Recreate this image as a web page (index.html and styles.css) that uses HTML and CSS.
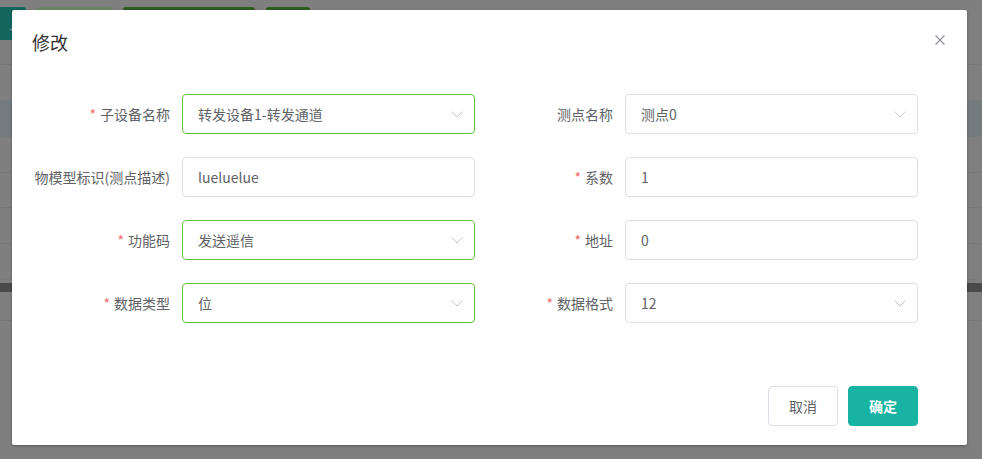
FILE: index.html
```html
<!DOCTYPE html>
<html lang="zh-CN">
<head>
<meta charset="utf-8">
<title>修改</title>
<link rel="stylesheet" href="styles.css">
</head>
<body>
<div class="page">
  <div class="toolbar">
    <span class="tb-btn tb-teal">入</span>
    <span class="tb-btn tb-olive"></span>
    <span class="tb-btn tb-green tb-wide"></span>
    <span class="tb-btn tb-green tb-small"></span>
  </div>
  <div class="row r1"></div>
  <div class="row band"></div>
  <div class="row r2"></div>
  <div class="row r3"></div>
  <div class="row r4"></div>
  <div class="row r5"></div>
  <div class="row dark"></div>
  <div class="row r6"></div>
</div>

<div class="dialog">
  <div class="dialog-header">
    <span class="dialog-title">修改</span>
    <button class="dialog-close" aria-label="关闭">
      <svg width="10" height="10" viewBox="0 0 10 10"><path d="M0.5 0.5 L9.5 9.5 M9.5 0.5 L0.5 9.5" stroke="#909399" stroke-width="1.2" fill="none"/></svg>
    </button>
  </div>
  <div class="dialog-body">
    <div class="form">
      <div class="form-item">
        <label class="label"><span class="req">*</span>子设备名称</label>
        <div class="input success select"><span>转发设备1-转发通道</span><svg class="arrow" width="12" height="7" viewBox="0 0 12 7"><path d="M0.5 0.5 L6 6 L11.5 0.5" stroke="#c0c4cc" stroke-width="1" fill="none"/></svg></div>
      </div>
      <div class="form-item">
        <label class="label">测点名称</label>
        <div class="input select"><span>测点0</span><svg class="arrow" width="12" height="7" viewBox="0 0 12 7"><path d="M0.5 0.5 L6 6 L11.5 0.5" stroke="#c0c4cc" stroke-width="1" fill="none"/></svg></div>
      </div>
      <div class="form-item">
        <label class="label">物模型标识(测点描述)</label>
        <div class="input"><span>lueluelue</span></div>
      </div>
      <div class="form-item">
        <label class="label"><span class="req">*</span>系数</label>
        <div class="input"><span>1</span></div>
      </div>
      <div class="form-item">
        <label class="label"><span class="req">*</span>功能码</label>
        <div class="input success select"><span>发送遥信</span><svg class="arrow" width="12" height="7" viewBox="0 0 12 7"><path d="M0.5 0.5 L6 6 L11.5 0.5" stroke="#c0c4cc" stroke-width="1" fill="none"/></svg></div>
      </div>
      <div class="form-item">
        <label class="label"><span class="req">*</span>地址</label>
        <div class="input"><span>0</span></div>
      </div>
      <div class="form-item">
        <label class="label"><span class="req">*</span>数据类型</label>
        <div class="input success select"><span>位</span><svg class="arrow" width="12" height="7" viewBox="0 0 12 7"><path d="M0.5 0.5 L6 6 L11.5 0.5" stroke="#c0c4cc" stroke-width="1" fill="none"/></svg></div>
      </div>
      <div class="form-item">
        <label class="label"><span class="req">*</span>数据格式</label>
        <div class="input select"><span>12</span><svg class="arrow" width="12" height="7" viewBox="0 0 12 7"><path d="M0.5 0.5 L6 6 L11.5 0.5" stroke="#c0c4cc" stroke-width="1" fill="none"/></svg></div>
      </div>
    </div>
  </div>
  <div class="dialog-footer">
    <button class="btn btn-default">取消</button>
    <button class="btn btn-primary">确定</button>
  </div>
</div>
</body>
</html>
```

FILE: styles.css
```css
* { box-sizing: border-box; }
html, body {
  margin: 0;
  padding: 0;
  width: 982px;
  height: 459px;
  overflow: hidden;
  background: #7f7f7f;
  font-family: "Noto Sans CJK SC", "Noto Sans", sans-serif;
}

/* underlying page (dimmed by mask) */
.page {
  width: 982px;
}
.toolbar {
  height: 65px;
  padding-top: 7px;
  display: flex;
  gap: 11px;
  border-bottom: 1px solid #767676;
}
.tb-btn {
  height: 33px;
  border-radius: 3px;
  display: inline-block;
}
.tb-teal {
  width: 26px;
  background: #12665c;
  color: #9fbdb8;
  font-size: 13px;
  line-height: 33px;
  text-align: right;
  padding-right: 4px;
  border-radius: 0 3px 3px 0;
}
.tb-olive { width: 75px; background: #6a8660; }
.tb-wide { width: 132px; }
.tb-small { width: 44px; }
.tb-green { background: #2f5c1f; }
.row { border-bottom: 1px solid #767676; }
.r1 { height: 35px; border-bottom: none; }
.band { height: 37px; background: #737b7f; border-bottom: none; }
.r2 { height: 36px; }
.r3 { height: 35px; }
.r4 { height: 36px; }
.r5 { height: 36px; border-bottom-color: #7a7a7a; }
.dark { height: 9px; background: #4a4a4a; border-bottom: none; margin-top: 3px; }
.r6 { height: 29px; }

/* dialog */
.dialog {
  position: absolute;
  left: 12px;
  top: 10px;
  width: 955px;
  height: 435px;
  background: #fff;
  border-radius: 2px;
  box-shadow: 0 1px 3px rgba(0,0,0,.3);
  display: flex;
  flex-direction: column;
}
.dialog-header {
  position: relative;
  padding: 20px 20px 10px;
}
.dialog-title {
  display: block;
  font-size: 18px;
  line-height: 24px;
  color: #303133;
}
.dialog-close {
  position: absolute;
  top: 25px;
  right: 22px;
  width: 10px;
  height: 10px;
  padding: 0;
  border: none;
  background: transparent;
  display: flex;
}
.dialog-body {
  padding: 30px 20px 0;
}
.form {
  display: grid;
  grid-template-columns: 443px 443px;
  row-gap: 23px;
}
.form-item {
  display: flex;
  height: 40px;
}
.label {
  width: 150px;
  padding-right: 12px;
  text-align: right;
  line-height: 40px;
  font-size: 14px;
  color: #606266;
  white-space: nowrap;
}
.req {
  color: #f56c6c;
  margin-right: 4px;
}
.input {
  width: 293px;
  height: 40px;
  border: 1px solid #dcdfe6;
  border-radius: 4px;
  padding: 0 15px;
  display: flex;
  align-items: center;
  font-size: 14px;
  color: #606266;
  position: relative;
}
.input.success { border-color: #67c23a; }
.arrow {
  position: absolute;
  right: 11px;
  top: 16px;
}
.dialog-footer {
  margin-top: auto;
  padding: 10px 49px 19px 20px;
  display: flex;
  justify-content: flex-end;
  gap: 10px;
}
.btn {
  height: 40px;
  padding: 0 20px;
  font-size: 14px;
  border-radius: 4px;
  font-family: "Noto Sans CJK SC", "Noto Sans", sans-serif;
  line-height: 38px;
}
.btn-default {
  background: #fff;
  border: 1px solid #dcdfe6;
  color: #606266;
}
.btn-primary {
  background: #17b3a3;
  border: 1px solid #17b3a3;
  color: #fff;
  font-weight: bold;
}
```
